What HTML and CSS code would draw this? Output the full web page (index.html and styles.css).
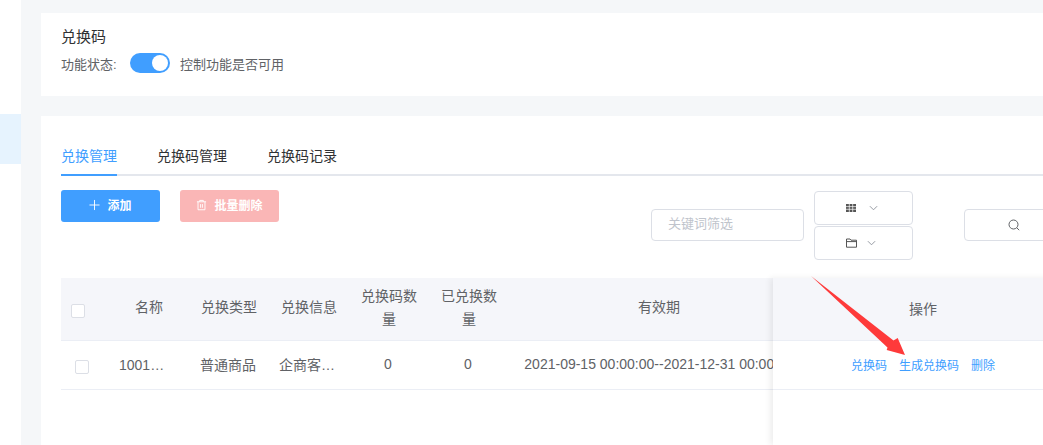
FILE: index.html
```html
<!DOCTYPE html>
<html lang="zh-CN">
<head>
<meta charset="utf-8">
<title>兑换码</title>
<link rel="stylesheet" href="styles.css">
</head>
<body>
<div class="layout">
  <aside class="sidebar"><div class="menu-active"></div></aside>
  <main class="main">
    <section class="card card-head">
      <h1 class="title">兑换码</h1>
      <div class="status-row">
        <span class="status-label">功能状态:</span>
        <span class="switch"><span class="knob"></span></span>
        <span>控制功能是否可用</span>
      </div>
    </section>
    <section class="card card-body">
      <nav class="tabs">
        <a class="tab tab-active">兑换管理</a>
        <a class="tab">兑换码管理</a>
        <a class="tab">兑换码记录</a>
      </nav>
      <div class="toolbar">
        <button class="btn btn-primary">
          <svg class="btn-icon" viewBox="0 0 12 12"><path d="M6 .5v11M.5 6h11" fill="none" stroke="#fff" stroke-width="1"/></svg>添加
        </button>
        <button class="btn btn-danger">
          <svg class="btn-icon" viewBox="0 0 12 12"><path d="M1 2.5h10M4 2.5V1h4v1.5M2.2 2.5v8.7h7.6V2.5M5 5v4M7 5v4" fill="none" stroke="#fff" stroke-width="1"/></svg>批量删除
        </button>
        <div class="filters">
          <div class="input">关键词筛选</div>
          <div class="select-stack">
            <div class="select">
              <svg class="sel-icon" viewBox="0 0 10 10"><path d="M0 1h10v8H0z" fill="#555"/><path d="M3.3 1v8M6.7 1v8M0 3.6h10M0 6.3h10" stroke="#fff" stroke-width=".7"/></svg>
              <svg class="chev" viewBox="0 0 10 6"><path d="M1 1l4 4 4-4" fill="none" stroke="#8a8f99" stroke-width="1"/></svg>
            </div>
            <div class="select select-folder">
              <svg class="sel-icon sel-icon-wide" viewBox="0 0 11 10"><path d="M.5 1h3.5l1 1.2h5.5v7H.5zM.5 3.6h10" fill="none" stroke="#555" stroke-width="1"/></svg>
              <svg class="chev" viewBox="0 0 10 6"><path d="M1 1l4 4 4-4" fill="none" stroke="#8a8f99" stroke-width="1"/></svg>
            </div>
          </div>
          <div class="search-btn">
            <svg class="search-icon" viewBox="0 0 12 12"><circle cx="5.5" cy="5.5" r="4.5" fill="none" stroke="#606266" stroke-width="1"/><path d="M8.8 8.8l2.4 2.4" stroke="#606266" stroke-width="1"/></svg>
          </div>
        </div>
      </div>
      <div class="table-wrap">
        <table class="table">
          <colgroup>
            <col class="col-check"><col class="col-80"><col class="col-80"><col class="col-80"><col class="col-80"><col class="col-80"><col class="col-300"><col class="col-300">
          </colgroup>
          <thead>
            <tr>
              <th class="cell-head-check"><span class="checkbox"></span></th>
              <th>名称</th><th>兑换类型</th><th>兑换信息</th><th>兑换码数量</th><th>已兑换数量</th><th>有效期</th><th></th>
            </tr>
          </thead>
          <tbody>
            <tr>
              <td class="cell-row-check"><span class="checkbox"></span></td>
              <td><div class="clip">1001兑换码</div></td>
              <td><div class="clip">普通商品</div></td>
              <td><div class="clip">企商客户专享</div></td>
              <td>0</td><td>0</td>
              <td><div class="nowrap">2021-09-15 00:00:00--2021-12-31 00:00:00</div></td>
              <td></td>
            </tr>
          </tbody>
        </table>
        <div class="fixed-col">
          <div class="fixed-head">操作</div>
          <div class="fixed-row">
            <a class="link">兑换码</a><a class="link">生成兑换码</a><a class="link">删除</a>
          </div>
        </div>
      </div>
    </section>
  </main>
</div>
<svg class="arrow" viewBox="0 0 1043 445"><polygon points="811,276 893.5,340.5 897.7,338 905,355 886.7,350 887.5,347.5" fill="#fe3a3a"/></svg>
</body>
</html>
```
FILE: styles.css
```css
* { box-sizing: border-box; }
html, body { margin: 0; padding: 0; }
body {
  width: 1043px;
  height: 445px;
  overflow: hidden;
  background: #fff;
  font-family: "Liberation Sans", "Noto Sans CJK SC", sans-serif;
  font-size: 14px;
  color: #606266;
}
.layout { display: flex; height: 445px; }
.sidebar { flex: 0 0 21px; padding-top: 114px; background: #fff; }
.menu-active { height: 50px; background: #e6f3fe; }
.main {
  flex: 1;
  min-width: 0;
  overflow: hidden;
  background: #f5f7f9;
  padding: 13px 0 0 20px;
}
.card { background: #fff; width: 1100px; }
.card-head { height: 83px; padding: 14px 0 0 20px; }
.title { margin: 0 0 6px; font-size: 15px; line-height: 20px; font-weight: 400; color: #303133; }
.status-row { display: flex; align-items: center; gap: 10px; height: 20px; font-size: 13px; }
.status-label { margin-right: 2px; width: 57px; }
.switch {
  display: flex;
  justify-content: flex-end;
  align-items: center;
  width: 40px;
  height: 20px;
  padding-right: 2px;
  border-radius: 10px;
  background: #409eff;
}
.knob { width: 16px; height: 16px; border-radius: 50%; background: #fff; }
.card-body { margin-top: 20px; height: 340px; padding: 20px 0 0 20px; }
.tabs { display: flex; gap: 40px; height: 40px; border-bottom: 2px solid #e4e7ed; width: 1080px; }
.tab { height: 40px; line-height: 40px; color: #303133; }
.tab-active { color: #409eff; border-bottom: 2px solid #409eff; }
.toolbar { display: flex; align-items: flex-start; gap: 20px; margin-top: 14px; }
.btn {
  display: flex;
  align-items: center;
  justify-content: center;
  gap: 7px;
  width: 99px;
  height: 32px;
  padding: 0 0 3px;
  border: 0;
  border-radius: 3px;
  color: #fff;
  font-family: inherit;
  font-size: 12px;
  font-weight: 700;
}
.btn-primary { background: #409eff; }
.btn-danger { background: #fab6b6; }
.btn-icon { width: 11px; height: 12px; }
.filters { display: flex; align-items: center; margin: 1px 0 0 352px; }
.input {
  width: 153px;
  height: 32px;
  margin-bottom: 1px;
  padding-left: 16px;
  border: 1px solid #dcdfe6;
  border-radius: 4px;
  line-height: 28px;
  font-size: 13px;
  color: #c0c4cc;
}
.select-stack { display: flex; flex-direction: column; gap: 1px; margin-left: 10px; }
.select {
  display: flex;
  align-items: center;
  gap: 13px;
  width: 99px;
  height: 34px;
  padding-left: 31px;
  border: 1px solid #dcdfe6;
  border-radius: 4px;
}
.select-folder { gap: 10px; }
.sel-icon { width: 10px; height: 10px; }
.sel-icon-wide { width: 11px; }
.chev { width: 9px; height: 6px; }
.search-btn {
  display: flex;
  align-items: center;
  justify-content: center;
  width: 99px;
  height: 32px;
  margin: 0 0 1px 51px;
  border: 1px solid #dcdfe6;
  border-radius: 4px;
}
.search-icon { width: 12px; height: 12px; }
.table-wrap { position: relative; width: 1048px; margin-top: 18px; }
.table { width: 1048px; table-layout: fixed; border-collapse: collapse; }
.col-check { width: 48px; }
.col-80 { width: 80px; }
.col-300 { width: 300px; }
.table th {
  height: 62px;
  padding: 0 12px 2px 12px;
  background: #f5f6fa;
  border-bottom: 1px solid #ebeef5;
  font-weight: 400;
  line-height: 23px;
  text-align: center;
}
.table td {
  height: 49px;
  padding: 0 12px 2px 10px;
  border-bottom: 1px solid #ebeef5;
  text-align: center;
}
.table .cell-head-check { padding: 4px 0 0 10px; text-align: left; }
.table .cell-row-check { padding: 4px 0 0 14px; text-align: left; }
.checkbox {
  display: block;
  width: 14px;
  height: 14px;
  background: #fff;
  border: 1px solid #dcdfe6;
  border-radius: 2px;
}
.clip { overflow: hidden; white-space: nowrap; text-overflow: ellipsis; }
.nowrap { white-space: nowrap; margin-left: 2px; }
.fixed-col {
  position: absolute;
  left: 712px;
  top: 0;
  width: 300px;
  height: 167px;
  background: #fff;
  box-shadow: -3px 0 6px rgba(0, 0, 0, .07);
}
.fixed-head {
  display: flex;
  align-items: center;
  justify-content: center;
  height: 63px;
  padding-bottom: 3px;
  background: #f5f6fa;
  border-bottom: 1px solid #ebeef5;
}
.fixed-row {
  display: flex;
  align-items: center;
  justify-content: center;
  gap: 12px;
  height: 49px;
  padding-bottom: 2px;
  border-bottom: 1px solid #ebeef5;
  font-size: 12px;
}
.link { color: #409eff; }
.arrow { position: absolute; left: 0; top: 0; width: 1043px; height: 445px; pointer-events: none; }
```
